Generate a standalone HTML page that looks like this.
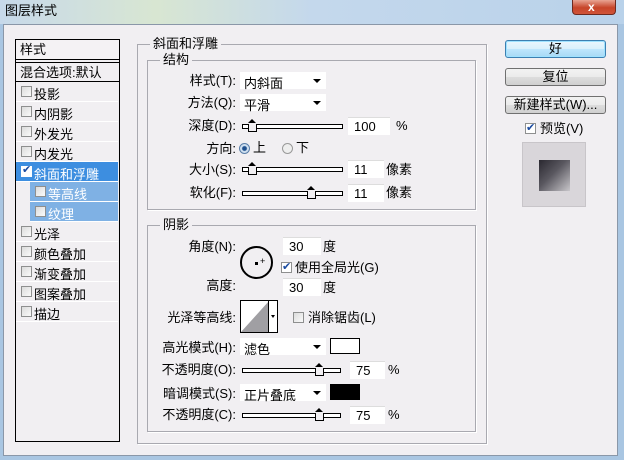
<!DOCTYPE html>
<html><head><meta charset="utf-8"><style>
*{margin:0;padding:0;box-sizing:border-box}
body{width:624px;height:460px;overflow:hidden;position:relative;background:#a9c6e2;font-family:"Liberation Sans","Noto Sans CJK SC",sans-serif;font-size:13px;color:#000}
.a{position:absolute}
.t{position:absolute;white-space:nowrap;line-height:14px}
.r{text-align:right}
.body{left:3px;top:24px;width:615px;height:432px;background:#f1eff2;border:1px solid #8a97a8}
.cb{position:absolute;width:11px;height:11px;border:1px solid #8e8f8f;background:linear-gradient(135deg,#dcdcdc,#fafafa)}
.li{position:absolute;left:16px;width:102px;height:20px;border-bottom:1px solid #fff}
.li .cb{left:5px;top:4px}
.li span{position:absolute;left:18px;top:2px;font-size:13px}
.grp{position:absolute;border:1px solid #a9a9b0;box-shadow:1px 1px 0 #fff}
.gl{position:absolute;background:#f1eff2;padding:0 3px;line-height:14px}
.combo{position:absolute;height:17px;background:#fff;}
.combo span{position:absolute;left:4px;top:1px}
.combo i{position:absolute;right:5px;top:7px;border:4px solid transparent;border-top:4px solid #000;border-bottom:0}
.sl{position:absolute;height:5px;border:1px solid #000;background:#fff}
.th{position:absolute;top:-1px;width:9px;height:8px;border:1px solid #000;border-top:none;background:#f1eff2}
.th:before{content:"";position:absolute;left:-1px;top:-5px;border:4.5px solid transparent;border-bottom:4px solid #000;border-top:0}
.inp{position:absolute;height:18px;background:#fff;border-top:1px solid #ddd;padding-left:6px;line-height:17px}
.btn{position:absolute;left:505px;width:101px;height:18px;border:1px solid #707070;border-radius:3px;background:linear-gradient(#f2f2f2,#ebebeb 50%,#dddddd 51%,#cfcfcf);text-align:center;line-height:16px}
</style></head><body>
<div class="a" style="left:0;top:0;width:624px;height:24px;background:linear-gradient(90deg,#c7d9ea,#d8e6d2 25%,#c4d8ec 50%,#b9d2ea)"></div>
<div class="t" style="left:5px;top:4px;font-size:13px">图层样式</div>
<div class="a" style="left:572px;top:0;width:44px;height:15px;border:1px solid #6d2a20;border-top:none;border-radius:0 0 4px 4px;background:linear-gradient(#e8a493,#c7452a 55%,#d0553a)"></div>
<div class="t" style="left:588px;top:0;color:#fff;font-weight:bold;font-size:12px">x</div>
<div class="a body"></div>

<div class="a" style="left:15px;top:39px;width:105px;height:403px;border:1px solid #000;background:#f1eff2"></div>
<div class="a" style="left:16px;top:40px;width:103px;height:20px;background:#f4f2f4"></div>
<div class="t" style="left:20px;top:43px">样式</div>
<div class="a" style="left:16px;top:59px;width:103px;height:4px;border-top:1px solid #000;border-bottom:1px solid #000"></div>
<div class="t" style="left:20px;top:66px">混合选项:默认</div>
<div class="a" style="left:16px;top:81px;width:103px;height:1px;background:#000"></div>
<div class="li" style="top:82px"><div class="cb"></div><span>投影</span></div>
<div class="li" style="top:102px"><div class="cb"></div><span>内阴影</span></div>
<div class="li" style="top:122px"><div class="cb"></div><span>外发光</span></div>
<div class="li" style="top:142px"><div class="cb"></div><span>内发光</span></div>
<div class="li" style="top:162px;background:#3d8ee0"><div class="cb" style="background:#fff;border-color:#fff"></div><span style="color:#fff">斜面和浮雕</span><span style="left:6px;top:1px;color:#1a4aa0;font-size:11px">✔</span></div>
<div class="li" style="top:182px;left:30px;width:88px;background:#7fb1e4"><div class="cb"></div><span style="color:#fff">等高线</span></div>
<div class="li" style="top:202px;left:30px;width:88px;background:#7fb1e4"><div class="cb"></div><span style="color:#fff">纹理</span></div>
<div class="li" style="top:222px"><div class="cb"></div><span>光泽</span></div>
<div class="li" style="top:242px"><div class="cb"></div><span>颜色叠加</span></div>
<div class="li" style="top:262px"><div class="cb"></div><span>渐变叠加</span></div>
<div class="li" style="top:282px"><div class="cb"></div><span>图案叠加</span></div>
<div class="li" style="top:302px"><div class="cb"></div><span>描边</span></div>

<div class="grp" style="left:137px;top:44px;width:350px;height:400px"></div>
<div class="gl" style="left:150px;top:37px">斜面和浮雕</div>
<div class="grp" style="left:147px;top:60px;width:329px;height:150px"></div>
<div class="gl" style="left:160px;top:53px">结构</div>
<div class="grp" style="left:147px;top:225px;width:329px;height:207px"></div>
<div class="gl" style="left:160px;top:218px">阴影</div>

<div class="t r" style="left:140px;width:96px;top:74px">样式(T):</div>
<div class="combo" style="left:240px;top:72px;width:86px"><span>内斜面</span><i></i></div>
<div class="t r" style="left:140px;width:96px;top:96px">方法(Q):</div>
<div class="combo" style="left:240px;top:94px;width:86px"><span>平滑</span><i></i></div>
<div class="t r" style="left:140px;width:96px;top:119px">深度(D):</div>
<div class="sl" style="left:242px;top:124px;width:101px"><div class="th" style="left:5px"></div></div>
<div class="inp" style="left:348px;top:117px;width:42px">100</div>
<div class="t" style="left:396px;top:119px">%</div>
<div class="t r" style="left:140px;width:96px;top:142px">方向:</div>
<div class="a" style="left:239px;top:143px;width:11px;height:11px;border-radius:50%;border:1px solid #5a7ea8;background:radial-gradient(#1e4f8e 30%,#cfe0f0 45%)"></div>
<div class="t" style="left:253px;top:141px">上</div>
<div class="a" style="left:282px;top:143px;width:11px;height:11px;border-radius:50%;border:1px solid #999;background:#eee"></div>
<div class="t" style="left:296px;top:141px">下</div>
<div class="t r" style="left:140px;width:96px;top:163px">大小(S):</div>
<div class="sl" style="left:242px;top:167px;width:101px"><div class="th" style="left:5px"></div></div>
<div class="inp" style="left:348px;top:160px;width:36px">11</div>
<div class="t" style="left:386px;top:163px">像素</div>
<div class="t r" style="left:140px;width:96px;top:186px">软化(F):</div>
<div class="sl" style="left:242px;top:191px;width:101px"><div class="th" style="left:64px"></div></div>
<div class="inp" style="left:348px;top:184px;width:36px">11</div>
<div class="t" style="left:386px;top:186px">像素</div>

<div class="t r" style="left:140px;width:96px;top:240px">角度(N):</div>
<div class="a" style="left:240px;top:246px;width:33px;height:33px;border-radius:50%;border:2px solid #000"></div>
<div class="a" style="left:255px;top:262px;width:3px;height:3px;background:#000"></div>
<div class="t" style="left:260px;top:254px;font-size:9px">+</div>
<div class="inp" style="left:283px;top:237px;width:38px">30</div>
<div class="t" style="left:323px;top:240px">度</div>
<div class="cb" style="left:281px;top:262px;background:#fff"></div>
<div class="t" style="left:282px;top:260px;color:#1a4aa0;font-size:11px">✔</div>
<div class="t" style="left:295px;top:261px">使用全局光(G)</div>
<div class="t r" style="left:140px;width:96px;top:279px">高度:</div>
<div class="inp" style="left:283px;top:278px;width:38px">30</div>
<div class="t" style="left:323px;top:281px">度</div>
<div class="t r" style="left:140px;width:96px;top:311px">光泽等高线:</div>
<div class="a" style="left:240px;top:300px;width:38px;height:33px;border:1px solid #000;background:#fff"></div>
<svg class="a" style="left:241px;top:301px" width="28" height="31"><polygon points="0,31 28,0 28,31" fill="#a09fa3"/></svg>
<div class="a" style="left:268px;top:301px;width:1px;height:31px;background:#000"></div>
<div class="a" style="left:271px;top:315px;border:2.5px solid transparent;border-top:3px solid #000"></div>
<div class="cb" style="left:293px;top:312px"></div>
<div class="t" style="left:308px;top:311px">消除锯齿(L)</div>
<div class="t r" style="left:130px;width:106px;top:341px">高光模式(H):</div>
<div class="combo" style="left:240px;top:338px;width:86px"><span>滤色</span><i></i></div>
<div class="a" style="left:330px;top:338px;width:30px;height:16px;border:1px solid #000;background:#fff"></div>
<div class="t r" style="left:130px;width:106px;top:363px">不透明度(O):</div>
<div class="sl" style="left:242px;top:368px;width:99px"><div class="th" style="left:72px"></div></div>
<div class="inp" style="left:350px;top:361px;width:35px">75</div>
<div class="t" style="left:388px;top:363px">%</div>
<div class="t r" style="left:130px;width:106px;top:387px">暗调模式(S):</div>
<div class="combo" style="left:240px;top:384px;width:86px"><span>正片叠底</span><i></i></div>
<div class="a" style="left:330px;top:384px;width:30px;height:16px;background:#000"></div>
<div class="t r" style="left:130px;width:106px;top:408px">不透明度(C):</div>
<div class="sl" style="left:242px;top:413px;width:99px"><div class="th" style="left:72px"></div></div>
<div class="inp" style="left:350px;top:406px;width:35px">75</div>
<div class="t" style="left:388px;top:408px">%</div>

<div class="btn" style="top:40px;border-color:#3c7fb1;background:linear-gradient(#eaf6fd,#d9f0fc 50%,#bee6fd 51%,#a7d9f5);box-shadow:inset 0 0 0 1px #9fe2ff">好</div>
<div class="btn" style="top:68px">复位</div>
<div class="btn" style="top:96px">新建样式(W)...</div>
<div class="cb" style="left:525px;top:123px;background:#fff"></div>
<div class="t" style="left:526px;top:121px;color:#1a4aa0;font-size:11px">✔</div>
<div class="t" style="left:540px;top:122px">预览(V)</div>
<div class="a" style="left:522px;top:142px;width:64px;height:65px;background:#d9d6da;border:1px solid #c8c5c9"></div>
<div class="a" style="left:539px;top:160px;width:31px;height:31px;background:linear-gradient(135deg,#2a2830,#5a5860 45%,#c8c6ca)"></div>
</body></html>
